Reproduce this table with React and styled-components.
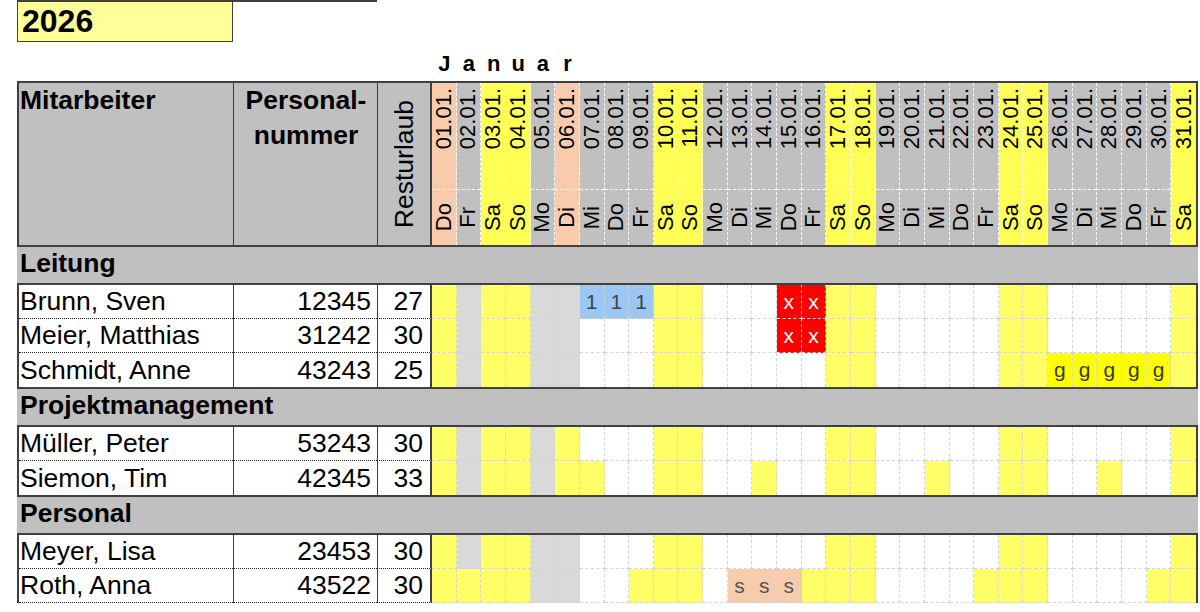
import styled, { createGlobalStyle } from "styled-components";

const GlobalStyle = createGlobalStyle`
  html, body {
    margin: 0;
    padding: 0;
    background: #fff;
  }
  body {
    font-family: "Liberation Sans", Arial, sans-serif;
    color: #000;
  }
  * {
    box-sizing: border-box;
  }
`;

const COLS = "214px 144px 55px repeat(31, 1fr)";
const LINE = "#404040";

const WEEKDAYS = ["Do", "Fr", "Sa", "So", "Mo", "Di", "Mi"];
const HOLIDAYS = [1, 6];

const days = Array.from({ length: 31 }, (_, i) => {
  const n = i + 1;
  const wd = WEEKDAYS[i % 7];
  let kind = "work";
  if (wd === "Sa" || wd === "So") kind = "weekend";
  if (HOLIDAYS.includes(n)) kind = "holiday";
  return { date: `${String(n).padStart(2, "0")}.01.`, wd, kind };
});

const groups = [
  {
    name: "Leitung",
    people: [
      { name: "Brunn, Sven", nr: "12345", rest: "27", plan: "YGYYGGBBBYY...RRYY.....YY.....Y" },
      { name: "Meier, Matthias", nr: "31242", rest: "30", plan: "YGYYGG...YY...RRYY.....YY.....Y" },
      { name: "Schmidt, Anne", nr: "43243", rest: "25", plan: "YGYYGG...YY.....YY.....YYgggggY" },
    ],
  },
  {
    name: "Projektmanagement",
    people: [
      { name: "Müller, Peter", nr: "53243", rest: "30", plan: "YGYYGY...YY.....YY.....YY.....Y" },
      { name: "Siemon, Tim", nr: "42345", rest: "33", plan: "YGYYGYY..YY..Y..YY..Y..YY..Y..Y" },
    ],
  },
  {
    name: "Personal",
    open: true,
    people: [
      { name: "Meyer, Lisa", nr: "23453", rest: "30", plan: "YGYYGG...YY.....YY.....YY.....Y" },
      { name: "Roth, Anna", nr: "43522", rest: "30", plan: "YYYYGG..YYY.sssYYY....YYY....YY" },
    ],
  },
];

const headBg = {
  work: "#c0c0c0",
  weekend: "#ffff55",
  holiday: "#f8cbad",
};

const cellStyle = {
  ".": { bg: "#ffffff", color: "#000", mark: "" },
  Y: { bg: "#ffff66", color: "#000", mark: "" },
  G: { bg: "#d9d9d9", color: "#000", mark: "" },
  B: { bg: "#9bc8f2", color: "#3c4650", mark: "1" },
  R: { bg: "#ff0000", color: "#ffffff", mark: "x" },
  g: { bg: "#ffff00", color: "#3a3a1a", mark: "g" },
  s: { bg: "#f8cbad", color: "#555", mark: "s" },
};

const Page = styled.div`
  width: 1200px;
  padding: 0 2px 0 17px;
`;

const TopLine = styled.div`
  width: 360px;
  height: 2px;
  background: ${LINE};
`;

const YearBox = styled.div`
  width: 216px;
  height: 40px;
  background: #ffff99;
  border: 1px solid ${LINE};
  border-top: none;
  display: flex;
  align-items: center;
  padding-left: 4px;
  font-weight: bold;
  font-size: 32px;
`;

const MonthRow = styled.div`
  height: 39px;
  margin-left: 415px;
  width: 764px;
  display: grid;
  grid-template-columns: repeat(31, 1fr);
  align-items: end;
  padding-bottom: 6px;
`;

const MonthLetter = styled.span`
  text-align: center;
  font-weight: bold;
  font-size: 22px;
  line-height: 22px;
`;

const Table = styled.div`
  width: 1181px;
`;

const HeadGrid = styled.div`
  display: grid;
  grid-template-columns: ${COLS};
  height: 166px;
  border: 2px solid ${LINE};
  background: #c0c0c0;
`;

const HeadCell = styled.div`
  font-weight: bold;
  font-size: 26.5px;
  line-height: 35px;
  padding-left: 1px;
  text-align: ${(p) => p.$align || "left"};
  border-left: ${(p) => (p.$divider ? `1px solid ${LINE}` : "none")};
`;

const RestHead = styled.div`
  border-left: 1px solid ${LINE};
  border-right: 2px solid ${LINE};
  display: flex;
  align-items: center;
  justify-content: center;
`;

const Vertical = styled.span`
  writing-mode: vertical-rl;
  transform: rotate(180deg);
  font-size: ${(p) => p.$size}px;
  line-height: 1;
  white-space: nowrap;
`;

const DayHead = styled.div`
  display: flex;
  flex-direction: column;
  background: ${(p) => headBg[p.$kind]};
  border-right: ${(p) => (p.$last ? "none" : "1px dashed #fff")};
`;

const DateArea = styled.div`
  height: 106px;
  display: flex;
  justify-content: center;
  align-items: flex-start;
  padding-top: 5px;
`;

const WeekdayArea = styled.div`
  flex: 1;
  border-top: 1px dashed #fff;
  display: flex;
  justify-content: center;
  align-items: center;
`;

const SectionRow = styled.div`
  height: 36px;
  background: #c0c0c0;
  display: flex;
  align-items: center;
  padding: 0 0 3px 3px;
  font-weight: bold;
  font-size: 26.5px;
`;

const Group = styled.div`
  border: 2px solid ${LINE};
  border-bottom: ${(p) => (p.$open ? "none" : `2px solid ${LINE}`)};
`;

const EmpRow = styled.div`
  display: grid;
  grid-template-columns: ${COLS};
  height: 34px;
`;

const TextCell = styled.div`
  display: flex;
  align-items: center;
  justify-content: ${(p) => (p.$right ? "flex-end" : "flex-start")};
  font-size: 26.5px;
  padding: 0 ${(p) => p.$pr || 0}px 0 ${(p) => p.$pl || 0}px;
  border-left: ${(p) => (p.$divider ? `1px solid ${LINE}` : "none")};
  border-right: ${(p) => (p.$thick ? `2px solid ${LINE}` : "none")};
  border-bottom: ${(p) => (p.$sep ? "1px dotted #222" : "none")};
`;

const DayCell = styled.div`
  display: flex;
  align-items: center;
  justify-content: center;
  background: ${(p) => p.$bg};
  color: ${(p) => p.$color};
  font-size: 21px;
  border-right: ${(p) => (p.$last ? "none" : "1px dashed #d4d4d4")};
  border-bottom: ${(p) => (p.$sep ? "1px dashed #d4d4d4" : "none")};
`;

const Header = () => (
  <HeadGrid>
    <HeadCell>Mitarbeiter</HeadCell>
    <HeadCell $align="center" $divider>
      Personal-
      <br />
      nummer
    </HeadCell>
    <RestHead>
      <Vertical $size={26.5}>Resturlaub</Vertical>
    </RestHead>
    {days.map((d, i) => (
      <DayHead key={d.date} $kind={d.kind} $last={i === days.length - 1}>
        <DateArea>
          <Vertical $size={22}>{d.date}</Vertical>
        </DateArea>
        <WeekdayArea>
          <Vertical $size={22}>{d.wd}</Vertical>
        </WeekdayArea>
      </DayHead>
    ))}
  </HeadGrid>
);

const Employee = ({ person, sep }) => (
  <EmpRow>
    <TextCell $pl={1} $sep={sep}>
      {person.name}
    </TextCell>
    <TextCell $right $divider $pr={6} $sep={sep}>
      {person.nr}
    </TextCell>
    <TextCell $right $divider $thick $pr={7} $sep={sep}>
      {person.rest}
    </TextCell>
    {person.plan.split("").map((code, i) => {
      const c = cellStyle[code];
      return (
        <DayCell key={i} $bg={c.bg} $color={c.color} $sep={sep} $last={i === 30}>
          {c.mark}
        </DayCell>
      );
    })}
  </EmpRow>
);

export default function App() {
  return (
    <>
      <GlobalStyle />
      <Page>
        <TopLine />
        <YearBox>2026</YearBox>
        <MonthRow>
          {"Januar".split("").map((ch, i) => (
            <MonthLetter key={i}>{ch}</MonthLetter>
          ))}
        </MonthRow>
        <Table>
          <Header />
          {groups.map((g) => (
            <div key={g.name}>
              <SectionRow>{g.name}</SectionRow>
              <Group $open={g.open}>
                {g.people.map((p, i) => (
                  <Employee
                    key={p.nr}
                    person={p}
                    sep={i < g.people.length - 1 || g.open}
                  />
                ))}
              </Group>
            </div>
          ))}
        </Table>
      </Page>
    </>
  );
}
